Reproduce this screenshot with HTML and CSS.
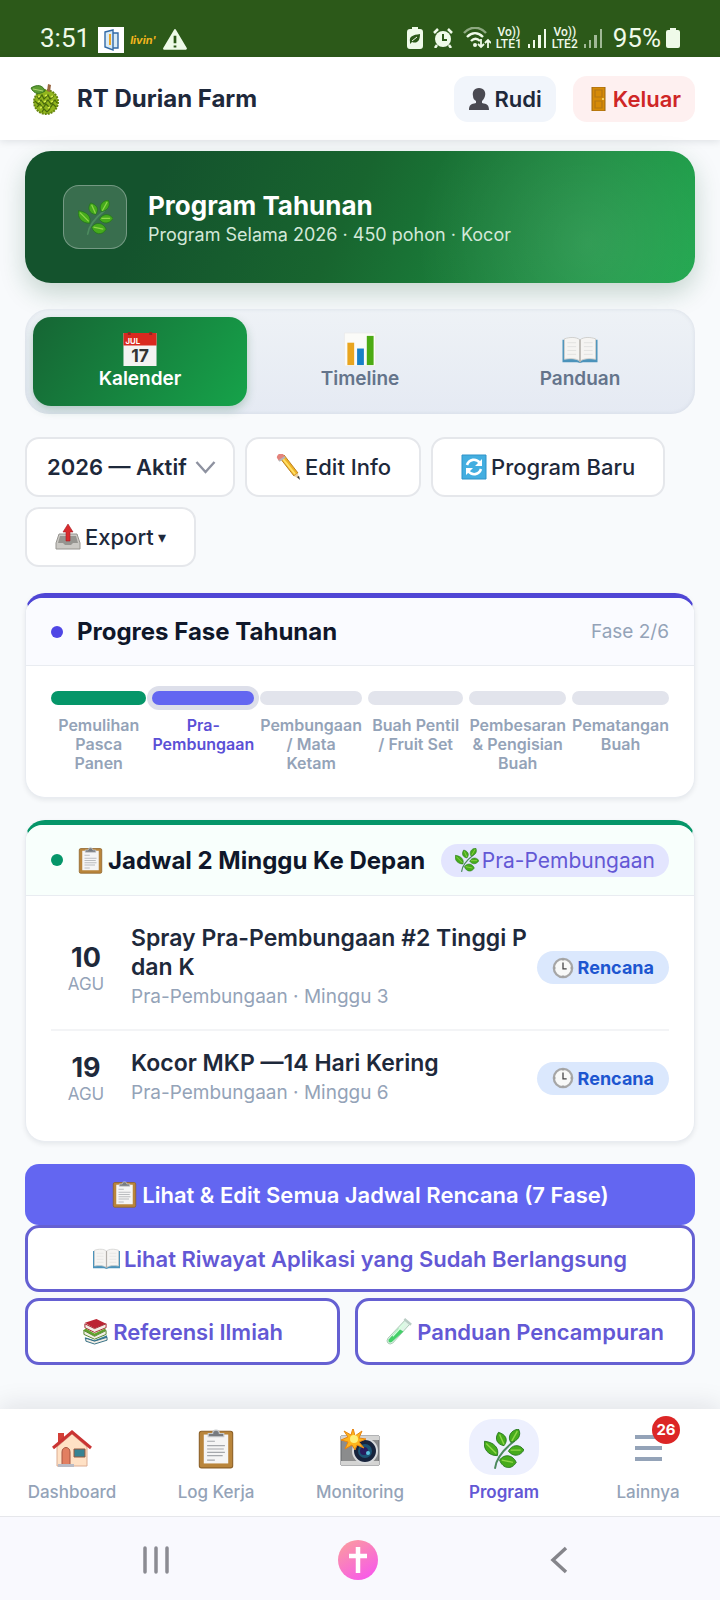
FILE: index.html
```html
<!DOCTYPE html>
<html lang="id">
<head>
    <meta charset="UTF-8" />
    <meta name="viewport" content="width=device-width, initial-scale=1.0" />
    <title>RT Durian Farm - Program Tahunan</title>
    <link rel="stylesheet" href="styles.css">
</head>

<body>
    <!-- Shared icons -->
    <svg class="sprite" width="0" height="0" aria-hidden="true">
        <symbol id="i-leaf" viewBox="0 0 36 36">
            <path d="M10 35C11 26 17 19 27 11" fill="none" stroke="#4c8a5e" stroke-width="1.8" stroke-linecap="round"/>
            <g fill="#46ab1c" stroke="#23751c" stroke-width=".8">
                <path d="M12 24C4 24-1 18 .5 11 9 12 14 17 12 24z"/>
                <path d="M18 15c-6-1-9-6-5-12 7 2 9 7 5 12z"/>
                <path d="M24 12c-3-5 0-11 7-12 3 5 0 11-7 12z"/>
                <path d="M22 20c3-6 10-7 14-1-4 6-10 6-14 1z"/>
                <path d="M14 28c4-6 12-5 15 2-4 7-12 6-15-2z"/>
            </g>
            <g fill="none" stroke="#8ed648" stroke-width="1.3">
                <path d="M2 13l9 9M14 5l4 9M30 2l-5 9M24 19h9M16 28l10 2"/>
            </g>
        </symbol>
        <symbol id="i-clipboard" viewBox="0 0 36 36">
            <rect x="3" y="2" width="30" height="33" rx="2" fill="#b9853b" stroke="#8d6128"/>
            <path d="M7 5h22v26H7z" fill="#f5f5f5"/>
            <path d="M10 11h7M10 15h16M10 18h15M10 21h16M10 24h14M10 28h7" stroke="#a5a8ac" stroke-width="1"/>
            <path d="M11 7V4h4c0-4 6-4 6 0h4v3z" fill="#777b80" stroke="#c7cacd"/>
        </symbol>
        <symbol id="i-book" viewBox="0 0 36 36">
            <path d="M0 8h36v23H21l-3 1-3-1H0z" fill="#4b93bb"/>
            <path d="M2 7c6-2 12-2 16 1 4-3 10-3 16-1v21c-6-1-12-1-16 2-4-3-10-3-16-2z" fill="#f5f4f2" stroke="#cfcfcd"/>
            <path d="M18 8v23" stroke="#b3afaa" stroke-width="1.6"/>
            <path d="M5 11h9M5 15h9M5 19h9M5 23h9M22 11h9M22 15h9M22 19h9M22 23h9" stroke="#e2e2e0"/>
        </symbol>
        <symbol id="i-clock" viewBox="0 0 24 24">
            <circle cx="12" cy="12" r="10" fill="#f8f9f8" stroke="#a6a6a6" stroke-width="2.5"/>
            <path d="M12 6v7h4" fill="none" stroke="#444" stroke-width="1.4"/>
            <path d="M12 3v1M21 12h-1M12 21v-1M3 12h1" stroke="#777"/>
        </symbol>
        <symbol id="i-signal" viewBox="0 0 20 20">
            <path d="M1 16h2v4H1zM6 12h2v8H6zM11 7h3v13h-3z"/>
            <path d="M17 1h2v19h-2z"/>
        </symbol>
    </svg>

    <!-- Phone status bar -->
    <div class="status-bar">
        <span class="status-time">3:51</span>
        <svg class="status-app" viewBox="0 0 26 26">
            <path fill="#fff" d="M0 0h26v26H0z"/>
            <path d="M7 5l8-2v20l-8-3zM15 6h5v15h-5" fill="#d9ebf6" stroke="#326aa6" stroke-width="1.4"/>
            <path d="M12 7v11" stroke="#eda92a" stroke-width="2"/>
        </svg>
        <span class="status-livin">livin'</span>
        <svg class="status-warn" viewBox="0 0 24 24"><path fill="#eefae9" stroke="#eefae9" stroke-width="2" stroke-linejoin="round" d="M12 3l10 17H2z"/><path stroke="#2c5919" stroke-width="2.5" d="M12 8v7M12 17v2"/></svg>

        <div class="status-right">
            <svg class="status-eco" viewBox="0 0 16 22"><path fill="#effae9" d="M5 0h6v2h2q3 0 3 3v14q0 3-3 3H3q-3 0-3-3V5q0-3 3-3h2z"/><path fill="#2c5919" d="M3 15C2 9 6 8 13 7c0 7-3 10-8 8l-2 2z"/><path stroke="#effae9" d="M5 14l5-4"/></svg>
            <svg class="status-alarm" viewBox="0 0 20 20"><circle cx="10" cy="11" r="8" fill="#effae9"/><path d="M1 5l4-4M15 1l4 4M4 17l-2 3M16 17l2 3" stroke="#effae9" stroke-width="2.5"/><path d="M10 6v6h4" fill="none" stroke="#2c5919" stroke-width="2"/></svg>
            <svg class="status-wifi" viewBox="0 0 28 22"><g fill="none" stroke="#effae9" stroke-width="2.4"><path opacity=".5" d="M1 6c6-7 16-7 22 0"/><path d="M4 10c5-5 11-5 16 0M8 14c3-3 6-3 9 0"/></g><circle cx="12" cy="18" r="2" fill="#effae9"/><path d="M18 12v8M15 17l3 3 3-3M25 21v-8M22 16l3-3 3 3" fill="none" stroke="#effae9" stroke-width="1.8"/></svg>
            <span class="status-lte">Vo))<br>LTE1</span>
            <svg class="status-signal"><use href="#i-signal"/></svg>
            <span class="status-lte">Vo))<br>LTE2</span>
            <svg class="status-signal weak"><use href="#i-signal"/></svg>
            <span class="status-percent">95%</span>
            <svg class="status-battery" viewBox="0 0 14 20"><path fill="#effae9" d="M4 0h6v2h2q2 0 2 2v14q0 2-2 2H2q-2 0-2-2V4q0-2 2-2h2z"/></svg>
        </div>
    </div>

    <header class="app-header">
        <svg class="brand-icon" viewBox="0 0 32 32">
            <circle cx="16" cy="19" r="12" fill="#91b51d" stroke="#67860f" stroke-width="2" stroke-dasharray="2 1"/>
            <path d="M7 13l2 3 3-4 2 4 4-4 2 4 4-3M5 18l3 3 3-4 3 4 4-4 3 4 4-4 2 3M7 24l3-3 3 4 3-4 4 4 3-4 3 3M12 29l2-3 3 3 3-3" fill="none" stroke="#48690c" stroke-width="1.2"/>
            <path d="M8 14l2-1M15 13l2-1M21 14l2-1M8 19l2-1M14 19l2-1M21 19l2-1M10 25l2-1M18 25l2-1" stroke="#d6e94b" stroke-width="1.6"/>
            <path d="M17 8L18 1l3 1-1 7z" fill="#996741"/>
            <path d="M1 5C7 1 13 2 15 8 9 12 4 11 1 5z" fill="#5e9d32" stroke="#397621"/><path d="M3 6l10 2" stroke="#acd36f"/>
        </svg>
        <h1>RT Durian Farm</h1>
        <button type="button" class="btn-user">
            <svg viewBox="0 0 22 22"><path fill="#4a4a52" d="M11 0c5 0 7 4 6 8-1 3-2 4-3 5v2c5 1 7 2 7 7H1c0-5 2-6 7-7v-2C6 12 5 10 5 8c-1-4 1-8 6-8z"/></svg>
            Rudi
        </button>
        <button type="button" class="btn-logout">
            <svg viewBox="0 0 22 24"><path fill="#d68a08" stroke="#9c6611" d="M5 0h13v24H5z"/><path fill="none" stroke="#b37613" stroke-width="1.2" d="M8 3h7v7H8zM8 14h7v7H8z"/><circle cx="16" cy="12" r="1" fill="#ffe27a"/></svg>
            Keluar
        </button>
    </header>

    <main>
        <section class="hero">
            <div class="hero-icon"><svg><use href="#i-leaf"/></svg></div>
            <div class="hero-text">
                <h2>Program Tahunan</h2>
                <p>Program Selama 2026 · 450 pohon · Kocor</p>
            </div>
        </section>

        <div class="tabs">
            <button type="button" class="tab active">
                <svg viewBox="0 0 36 36"><path fill="#f4f3f2" d="M1 1h34v34H1z"/><path fill="#d9291f" d="M1 1h34v13H1z"/><path d="M7 0v3M29 0v3" stroke="#8f2822" stroke-width="3"/><text x="3" y="12" class="cal-month">JUL</text><text x="18" y="31" class="cal-day" text-anchor="middle">17</text></svg>
                Kalender
            </button>
            <button type="button" class="tab">
                <svg viewBox="0 0 36 36"><path fill="#fbfbf8" stroke="#ececec" d="M2 1h32v34H2z"/><path fill="#e9a51e" d="M5 11h7v23H5z"/><path fill="#1780c8" d="M15 17h7v17h-7z"/><path fill="#4cab13" d="M25 4h7v30h-7z"/></svg>
                Timeline
            </button>
            <button type="button" class="tab">
                <svg><use href="#i-book"/></svg>
                Panduan
            </button>
        </div>

        <div class="toolbar">
            <div class="select-wrap">
                <select aria-label="Program">
                    <option>2026 — Aktif</option>
                </select>
                <svg viewBox="0 0 20 14"><path d="M1 2l9 10 9-10" fill="none" stroke="#8e92a0" stroke-width="2.4"/></svg>
            </div>
            <button type="button" class="btn-tool">
                <svg viewBox="0 0 26 26"><path fill="#f0b526" stroke="#bd8122" d="M5 4l4-3 14 18-4 3z"/><path stroke="#ffdf68" stroke-width="2" d="M8 5l12 15"/><path fill="#e4837b" d="M2 4c-1-3 4-6 6-4l2 3-6 4z"/><path stroke="#b4b6b8" stroke-width="2" d="M4 7l6-4"/><path fill="#ead0a0" d="M19 22l4-3 1 6z"/><path fill="#333" d="M22 23l2-1 1 4z"/></svg>
                Edit Info
            </button>
            <button type="button" class="btn-tool">
                <svg viewBox="0 0 26 26"><path fill="#43aee0" stroke="#2e93c8" d="M1 1h24v24H1z"/><path d="M6 11c2-6 9-7 13-2M20 15c-2 6-9 7-13 2" fill="none" stroke="#fff" stroke-width="2.6"/><path fill="#fff" d="M21 5v7h-7zM5 21v-7h7z"/></svg>
                Program Baru
            </button>
            <button type="button" class="btn-tool">
                <svg viewBox="0 0 26 26"><path fill="#cbc9c4" stroke="#96948f" d="M4 10h18l3 9v6H1v-6z"/><path fill="#969590" d="M5 12h16l2 7h-5l-2 2h-6l-2-2H3z"/><path fill="#d92b2d" stroke="#a51d23" stroke-width=".6" d="M13 0l5 8h-3v9h-4V8H8z"/></svg>
                Export<small>▾</small>
            </button>
        </div>

        <!-- Phase progress -->
        <section class="card card-indigo">
            <div class="card-head">
                <span class="dot"></span>
                <h3>Progres Fase Tahunan</h3>
                <span class="phase-count">Fase 2/6</span>
            </div>
            <div class="phases">
                <div class="phase done">Pemulihan Pasca Panen</div>
                <div class="phase current">Pra-Pembungaan</div>
                <div class="phase">Pembungaan / Mata Ketam</div>
                <div class="phase">Buah Pentil / Fruit Set</div>
                <div class="phase">Pembesaran &amp; Pengisian Buah</div>
                <div class="phase">Pematangan Buah</div>
            </div>
        </section>

        <!-- Upcoming schedule -->
        <section class="card card-green">
            <div class="card-head">
                <span class="dot"></span>
                <h3><svg><use href="#i-clipboard"/></svg>Jadwal 2 Minggu Ke Depan</h3>
                <span class="phase-tag"><svg><use href="#i-leaf"/></svg>Pra-Pembungaan</span>
            </div>
            <div class="schedule">
                <div class="schedule-row">
                    <div class="date"><b>10</b>AGU</div>
                    <div class="task">
                        <h4>Spray Pra-Pembungaan #2 Tinggi P dan K</h4>
                        <p>Pra-Pembungaan · Minggu 3</p>
                    </div>
                    <span class="plan-tag"><svg><use href="#i-clock"/></svg>Rencana</span>
                </div>
                <div class="schedule-row">
                    <div class="date"><b>19</b>AGU</div>
                    <div class="task">
                        <h4>Kocor MKP —14 Hari Kering</h4>
                        <p>Pra-Pembungaan · Minggu 6</p>
                    </div>
                    <span class="plan-tag"><svg><use href="#i-clock"/></svg>Rencana</span>
                </div>
            </div>
        </section>

        <button type="button" class="btn-primary"><svg><use href="#i-clipboard"/></svg>Lihat &amp; Edit Semua Jadwal Rencana (7 Fase)</button>
        <button type="button" class="btn-outline"><svg><use href="#i-book"/></svg>Lihat Riwayat Aplikasi yang Sudah Berlangsung</button>
        <div class="btn-row">
            <button type="button" class="btn-outline">
                <svg viewBox="0 0 28 28"><path fill="#bb2533" d="M3 5l12-4 10 5-12 5z"/><path fill="#f3eee6" stroke="#a32730" d="M3 6l10 5 12-5v4l-12 5-10-5z"/><path fill="#61a32c" d="M1 13l3-2 9 5 11-5 1 2-12 6z"/><path fill="#f3eee6" stroke="#54852f" d="M2 13l11 6 12-6v4l-12 5-11-5z"/><path fill="#387e95" d="M3 20l10 3 13-5v2l-13 5-10-3z"/><path fill="#f3eee6" stroke="#326c83" d="M4 21l9 3 13-4v3l-13 4-9-3z"/></svg>
                Referensi Ilmiah
            </button>
            <button type="button" class="btn-outline">
                <svg viewBox="0 0 28 28"><path fill="#dff4e6" stroke="#a8c8b4" d="M20 2l5 4L7 26q-3 2-5 0t0-5z"/><path fill="#43cf68" d="M13 11l5 3L6 25q-2 1-3 0t0-3z"/><path stroke="#d6ffe0" stroke-width="1.5" d="M19 6L7 19"/><path stroke="#b9cdc4" stroke-width="2.5" d="M19 1l7 6"/></svg>
                Panduan Pencampuran
            </button>
        </div>
    </main>

    <nav class="bottom-nav">
        <a href="#">
            <span class="nav-icon"><svg viewBox="0 0 40 40"><path fill="#d43f37" d="M6 4h6v9H6z"/><path fill="#ffe1c5" stroke="#dcac91" d="M5 18L20 5l15 13v19H5z"/><path fill="none" stroke="#ca3433" stroke-width="3" d="M1 19L20 3l19 16"/><path fill="#e27f61" stroke="#a65743" d="M10 36V23c0-6 8-6 8 0v13z"/><path fill="#368393" stroke="#98593e" d="M22 20h11v8H22z"/><path fill="#b9bbc5" d="M6 35h16v3H6z"/></svg></span>
            Dashboard
        </a>
        <a href="#">
            <span class="nav-icon"><svg><use href="#i-clipboard"/></svg></span>
            Log Kerja
        </a>
        <a href="#">
            <span class="nav-icon"><svg viewBox="0 0 40 40"><path fill="#8b8c8d" stroke="#65676a" d="M1 7h38v29H1z"/><path fill="#d4d4d3" d="M1 7h38v4H1zM1 32h38v4H1z"/><circle cx="25" cy="22" r="12" fill="#17233c" stroke="#d9dbdd" stroke-width="2"/><circle cx="25" cy="22" r="7" fill="#1b5374"/><circle cx="24" cy="22" r="4" fill="#281c5d"/><circle cx="28" cy="24" r="2" fill="#59c2df"/><path fill="#ffb51b" stroke="#e68514" d="M13-1l2 8 7-5-3 7 7 1-7 3 5 6-7-3-2 5-3-5-7 4 3-7-7-2 7-3-4-6 7 4z"/><circle cx="14" cy="10" r="4" fill="#fff07a"/></svg></span>
            Monitoring
        </a>
        <a href="#" class="active">
            <span class="nav-icon"><svg><use href="#i-leaf"/></svg></span>
            Program
        </a>
        <a href="#">
            <span class="nav-icon"><svg viewBox="0 0 40 40"><path d="M7 8h27M7 19h27M7 30h27" stroke="#94a3b8" stroke-width="4"/></svg><span class="badge">26</span></span>
            Lainnya
        </a>
    </nav>

    <!-- Phone navigation keys -->
    <div class="system-nav">
        <button type="button" aria-label="Recent apps"><svg viewBox="0 0 40 40"><path d="M9 8v24M20 8v24M31 8v24" stroke="#8b8b92" stroke-width="3.5" stroke-linecap="round"/></svg></button>
        <button type="button" aria-label="Home"><svg viewBox="0 0 40 40"><defs><linearGradient id="pink" x1="0" y1="0" x2="0.6" y2="1"><stop offset="0" stop-color="#fba09a"/><stop offset="1" stop-color="#f85de6"/></linearGradient></defs><circle cx="20" cy="20" r="20" fill="url(#pink)"/><path d="M20 7v26M11 16h18" stroke="#fff" stroke-width="4.5"/></svg></button>
        <button type="button" aria-label="Back"><svg viewBox="0 0 40 40"><path d="M26 8L13 20l13 12" fill="none" stroke="#85858b" stroke-width="3.5"/></svg></button>
    </div>
</body>
</html>
```

FILE: styles.css
```css
/* Basic reset and background */
* {
    box-sizing: border-box;
}

body {
    display: flex;
    flex-direction: column;
    min-height: 100vh;
    margin: 0;
    background: #f8fafc;
    color: #1e293b;
    font-family: Inter, "Noto Sans", sans-serif;
    font-size: 22px;
}

h1, h2, h3, h4, p {
    margin: 0;
}

button, select {
    font: inherit;
    color: inherit;
    border: none;
    cursor: pointer;
}

svg {
    flex: none;
}

.sprite {
    position: absolute;
}

/* Phone status bar */
.status-bar {
    display: flex;
    align-items: flex-end;
    gap: 6px;
    height: 57px;
    padding: 0 40px 4px;
    background: #2c5919;
    color: #effae9;
}

.status-time,
.status-percent {
    font-family: Roboto, sans-serif;
    font-size: 26px;
    line-height: 30px;
}

.status-percent {
    margin-left: 5px;
}

.status-time {
    margin-right: 2px;
}

.status-app,
.status-livin,
.status-warn {
    height: 26px;
    width: 26px;
}

.status-livin {
    color: #f2b51d;
    font-size: 11px;
    line-height: 26px;
    font-style: italic;
    font-weight: 700;
}

.status-right {
    display: flex;
    align-items: center;
    gap: 5px;
    height: 30px;
    margin-left: auto;
}

.status-eco {
    width: 16px;
    height: 22px;
    margin-right: 5px;
}

.status-alarm {
    width: 20px;
    height: 20px;
    margin-right: 5px;
}

.status-wifi {
    width: 28px;
    height: 22px;
}

.status-lte {
    font-family: Roboto, sans-serif;
    font-size: 12px;
    line-height: 12px;
    font-weight: 500;
    text-align: center;
}

.status-signal {
    width: 20px;
    height: 20px;
    fill: #effae9;
}

.status-signal.weak {
    opacity: 0.6;
}

.status-battery {
    width: 14px;
    height: 20px;
}

/* App header */
.app-header {
    display: flex;
    align-items: center;
    height: 83px;
    padding: 0 25px 0 30px;
    background: #fff;
    box-shadow: 0 1px 8px rgba(15, 23, 42, 0.12);
}

.brand-icon {
    width: 32px;
    height: 32px;
    margin-right: 15px;
}

h1 {
    margin-right: auto;
    font-size: 24px;
    font-weight: 700;
}

.btn-user,
.btn-logout {
    display: flex;
    align-items: center;
    gap: 4px;
    height: 46px;
    padding: 0 14px;
    border-radius: 14px;
    background: #f1f5fb;
    font-weight: 600;
}

.btn-logout {
    margin-left: 17px;
    background: #fef0f0;
    color: #cf2626;
}

.btn-user svg,
.btn-logout svg {
    width: 22px;
    height: 24px;
}

/* Main column */
main {
    flex: 1;
    padding: 11px 25px 44px;
}

/* Green banner */
.hero {
    display: flex;
    align-items: center;
    gap: 21px;
    height: 132px;
    padding: 0 38px;
    border-radius: 26px;
    background:
        radial-gradient(circle at 84% 70%, rgba(255, 255, 255, 0.1), transparent 30%),
        linear-gradient(115deg, #14532d 20%, #18652f 48%, #1da64c);
    box-shadow: 0 10px 26px rgba(20, 83, 45, 0.22);
    color: #fff;
}

.hero-icon {
    display: flex;
    align-items: center;
    justify-content: center;
    width: 64px;
    height: 64px;
    border: 1px solid rgba(255, 255, 255, 0.3);
    border-radius: 16px;
    background: rgba(255, 255, 255, 0.16);
}

.hero-icon svg {
    width: 35px;
    height: 35px;
}

.hero-text {
    padding-top: 3px;
}

.hero h2 {
    font-size: 26px;
    line-height: 32px;
}

.hero p {
    font-size: 18px;
    line-height: 26px;
    color: #d3e8d9;
}

/* Tabs */
.tabs {
    display: grid;
    grid-template-columns: repeat(3, 1fr);
    gap: 6px;
    margin: 26px 0 23px;
    padding: 8px;
    border-radius: 24px;
    background: linear-gradient(#eef2f6, #e5eaf3);
    box-shadow: inset 0 0 4px rgba(100, 116, 139, 0.14);
}

.tab {
    display: flex;
    flex-direction: column;
    align-items: center;
    justify-content: center;
    height: 89px;
    border-radius: 18px;
    background: none;
    color: #64748b;
    font-size: 19px;
    line-height: 24px;
    font-weight: 600;
}

.tab svg {
    width: 36px;
    height: 35px;
}

.tab.active {
    background: linear-gradient(125deg, #166534, #16a34a);
    box-shadow: 0 4px 10px rgba(22, 101, 52, 0.25);
    color: #fff;
}

.cal-month {
    fill: #fff;
    font-size: 8px;
    font-weight: 700;
}

.cal-day {
    fill: #333;
    font-size: 18px;
    font-weight: 700;
}

/* Toolbar buttons */
.toolbar {
    display: flex;
    flex-wrap: wrap;
    gap: 10px;
    margin-bottom: 26px;
}

.select-wrap {
    position: relative;
}

.select-wrap svg {
    position: absolute;
    top: 23px;
    right: 19px;
    width: 21px;
    height: 14px;
    pointer-events: none;
}

select,
.btn-tool {
    height: 60px;
    border: 2px solid #e5e7eb;
    border-radius: 14px;
    background: #fff;
    font-weight: 500;
}

select {
    appearance: none;
    width: 210px;
    padding: 0 20px;
    font-weight: 600;
}

.btn-tool {
    display: flex;
    align-items: center;
    gap: 4px;
    padding: 0 28px;
}

.btn-tool svg {
    width: 26px;
    height: 26px;
}

.btn-tool small {
    font-size: 16px;
}

/* Cards */
.card {
    margin-bottom: 22px;
    border: 1px solid #e9ecf1;
    border-top: 5px solid #4f46d5;
    border-radius: 20px;
    background: #fff;
    box-shadow: 0 2px 5px rgba(15, 23, 42, 0.08);
}

.card-head {
    display: flex;
    align-items: center;
    height: 68px;
    padding: 0 25px;
    border-bottom: 1px solid #e9ecf1;
    border-radius: 16px 16px 0 0;
    background: #fafbff;
}

.dot {
    flex: none;
    width: 12px;
    height: 12px;
    margin-right: 14px;
    border-radius: 50%;
    background: #4f46e5;
}

.card h3 {
    display: flex;
    align-items: center;
    gap: 4px;
    margin-right: auto;
    color: #0f172a;
    font-size: 24px;
    font-weight: 700;
    white-space: nowrap;
}

.card h3 svg {
    width: 27px;
    height: 27px;
}

.card-green {
    border-top-color: #059669;
}

.card-green .card-head {
    height: 71px;
    background: #f8fffc;
}

.card-green .dot {
    background: #059669;
}

.phase-count {
    color: #94a3b8;
    font-size: 19px;
}

/* Phase progress bars */
.phases {
    display: flex;
    gap: 6px;
    padding: 25px 25px 24px;
}

.phase {
    flex: 1;
    color: #94a3b8;
    font-size: 16px;
    line-height: 19px;
    font-weight: 600;
    text-align: center;
}

.phase::before {
    content: "";
    display: block;
    height: 14px;
    margin-bottom: 11px;
    border-radius: 7px;
    background: #e2e4ec;
}

.phase.done::before {
    background: #059669;
}

.phase.current {
    color: #5b50d6;
}

.phase.current::before {
    background: #6366f1;
    box-shadow: 0 0 0 5px #dddfea;
}

/* Tags */
.phase-tag,
.plan-tag {
    display: flex;
    align-items: center;
    flex: none;
    gap: 3px;
    height: 33px;
    padding: 0 14px;
    border-radius: 17px;
    background: #e3e5fe;
    color: #6358d5;
    font-size: 21px;
}

.phase-tag svg {
    width: 24px;
    height: 24px;
}

.plan-tag {
    gap: 4px;
    padding: 0 15px;
    background: #dbe8fd;
    color: #1d56d0;
    font-size: 18px;
    font-weight: 700;
}

.plan-tag svg {
    width: 22px;
    height: 22px;
}

/* Schedule list */
.schedule {
    padding: 10px 25px 16px;
}

.schedule-row {
    display: flex;
    align-items: center;
    padding: 18px 0;
}

.schedule-row + .schedule-row {
    border-top: 2px solid #f3f4f6;
}

.date {
    width: 70px;
    margin-right: 10px;
    color: #94a3b8;
    font-size: 17px;
    line-height: 21px;
    text-align: center;
}

.date b {
    display: block;
    color: #1e293b;
    font-size: 27px;
    line-height: 33px;
}

.task {
    flex: 1;
}

.task h4 {
    font-size: 23px;
    line-height: 29px;
    font-weight: 600;
}

.task p {
    color: #94a3b8;
    font-size: 19px;
    line-height: 29px;
}

/* Action buttons */
.btn-primary,
.btn-outline {
    display: flex;
    align-items: center;
    justify-content: center;
    gap: 4px;
    width: 100%;
    height: 67px;
    padding: 0 10px;
    border: 3px solid #6560d2;
    border-radius: 14px;
    background: #fff;
    color: #6358d5;
    font-weight: 600;
    white-space: nowrap;
}

.btn-primary {
    height: 61px;
    border: none;
    background: #6366f1;
    color: #fff;
}

.btn-primary svg,
.btn-outline svg {
    width: 27px;
    height: 27px;
}

.btn-row {
    display: flex;
    gap: 15px;
    margin-top: 6px;
}

.btn-row .btn-outline {
    flex: 1;
    padding: 0 28px;
}

/* Bottom navigation */
.bottom-nav {
    display: grid;
    grid-template-columns: repeat(5, 1fr);
    height: 107px;
    padding-top: 10px;
    background: #fff;
    box-shadow: 0 -4px 24px rgba(15, 23, 42, 0.1);
}

.bottom-nav a {
    display: flex;
    flex-direction: column;
    align-items: center;
    gap: 6px;
    color: #94a3b8;
    font-size: 17px;
    line-height: 22px;
    font-weight: 500;
    text-decoration: none;
}

.nav-icon {
    position: relative;
    display: flex;
    align-items: center;
    justify-content: center;
    width: 70px;
    height: 56px;
    padding-top: 4px;
    border-radius: 24px;
}

.nav-icon svg {
    width: 40px;
    height: 40px;
}

.bottom-nav .active {
    color: #6358d5;
    font-weight: 600;
}

.active .nav-icon {
    background: #edf0fe;
}

.badge {
    position: absolute;
    top: -3px;
    right: 3px;
    width: 28px;
    height: 28px;
    border-radius: 50%;
    background: #dc2626;
    color: #fff;
    font-size: 15px;
    line-height: 28px;
    font-weight: 700;
    text-align: center;
}

/* Phone navigation keys */
.system-nav {
    display: flex;
    align-items: center;
    justify-content: space-between;
    height: 84px;
    padding: 3px 140px 0 136px;
    border-top: 1px solid #e6e7eb;
    background: #f9f9fe;
}

.system-nav button {
    width: 40px;
    height: 40px;
    padding: 0;
    background: none;
}

.system-nav svg {
    display: block;
    width: 40px;
    height: 40px;
}
```
